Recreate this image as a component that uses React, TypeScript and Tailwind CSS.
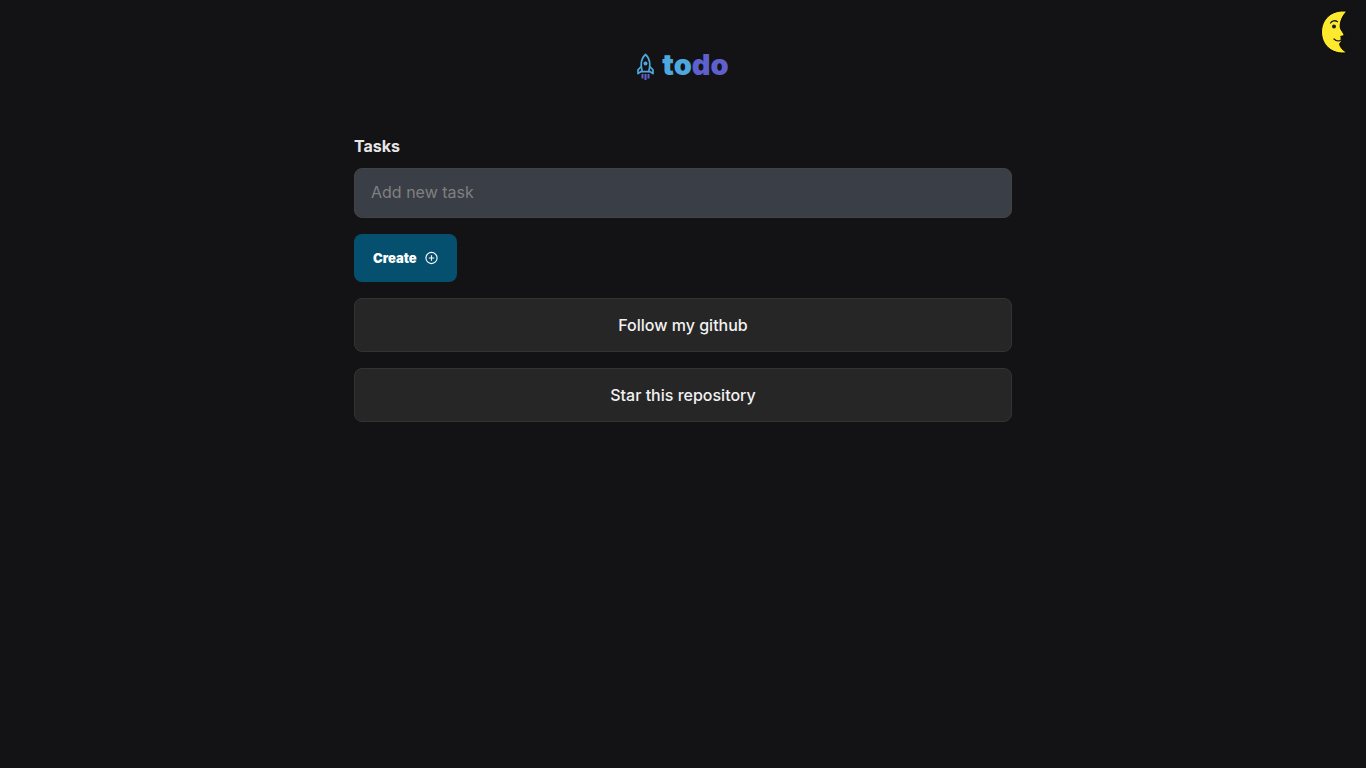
import { useState } from "react";
import type { FormEvent } from "react";

function Rocket() {
  return (
    <svg className="mt-1" width="17" height="28" viewBox="0 0 17 28" fill="none" aria-hidden="true">
      <g stroke="#4EA8DE" strokeWidth="1.700" strokeLinejoin="round">
        <path d="M8.500 1.500C6.500 3.300 4.200 7.500 4.200 11.500c0 2.800.5 5 1.200 7.200h6.200c.7-2.200 1.200-4.400 1.200-7.200 0-4-2.300-8.200-4.300-10Z" />
        <path d="M4.300 13.500 1 16.800v3.800l2.700-1.900h1.700M12.700 13.500l3.300 3.300v3.800l-2.700-1.900h-1.700" />
      </g>
      <circle cx="8.500" cy="10.500" r="2" fill="#4EA8DE" />
      <path d="M5.500 21v4.500M8.500 21v6M11.500 21v4.500" stroke="#5E60CE" strokeWidth="2" />
    </svg>
  );
}

function Moon() {
  return (
    <svg width="28" height="44" viewBox="0 0 28 44" aria-hidden="true">
      <path
        d="M27 1.300C11-1 1.500 10 1.500 22s9.500 23 25.500 20.700c-4-2.200-6.900-5.400-7.400-8.400.1-1.700 1.900-2.200 1.900-3.700 0-.8-.5-1.300-.5-2 .2-.9 0-1.700-.3-2.200 1-.3 3.300-.6 3.200-1.800-.1-1.700-3.400-4.500-3.700-7.500C19.900 11.500 22.500 5.500 27 1.300Z"
        fill="#FFE92E"
        stroke="#050505"
        strokeWidth="1"
      />
      <ellipse cx="14" cy="16.500" rx="2" ry="2.100" fill="#17202B" />
      <g fill="none" stroke="#17202B" strokeWidth="1.300" strokeLinecap="round">
        <path d="M10.500 13c1.400-2.200 4.500-3 7-1.300" />
        <path d="M14 29c1.700 1.900 4.300 2.300 6.500 1.300" />
      </g>
    </svg>
  );
}

function PlusCircle() {
  return (
    <svg width="13" height="14" viewBox="0 0 13 14" fill="none" stroke="currentColor" aria-hidden="true">
      <circle cx="6.500" cy="7" r="5.600" strokeWidth="1.100" />
      <path d="M6.500 4.300v5.400M3.800 7h5.400" strokeWidth="1.100" />
    </svg>
  );
}

const links = [
  { label: "Follow my github", href: "#github" },
  { label: "Star this repository", href: "#repository" },
];

export default function App() {
  const [task, setTask] = useState("");
  const submit = (event: FormEvent) => {
    event.preventDefault();
    setTask("");
  };

  return (
    <div className="min-h-screen bg-[#131315] font-['Inter',sans-serif] text-[#f2f2f2]">
      <button type="button" aria-label="Toggle theme" className="absolute top-2.5 right-[18px] cursor-pointer">
        <Moon />
      </button>
      <header className="flex items-center justify-center gap-2 pt-[45px]">
        <Rocket />
        <h1 className="text-[29px] leading-10 font-black text-[#4EA8DE]">
          to<span className="text-[#5E60CE]">do</span>
        </h1>
      </header>
      <main className="mx-auto mt-[49px] flex w-full max-w-[658px] flex-col gap-4">
        <form onSubmit={submit} className="flex flex-col items-start">
          <label htmlFor="task" className="mb-2.5 text-base leading-6 font-bold text-[#e6e6e6]">
            Tasks
          </label>
          <input
            id="task"
            value={task}
            onChange={(event) => setTask(event.target.value)}
            placeholder="Add new task"
            className="h-[50px] w-full rounded-lg border border-[#434343] bg-[#3a3e46] px-4 pb-0.5 text-base placeholder:text-[#808080]"
          />
          <button
            type="submit"
            className="mt-4 flex h-12 cursor-pointer items-center gap-2 rounded-lg bg-[#04506e] px-[19px] text-[13px] leading-5 font-black text-white"
          >
            Create
            <PlusCircle />
          </button>
        </form>
        {links.map((link) => (
          <a
            key={link.label}
            href={link.href}
            className="flex h-[54px] items-center justify-center rounded-lg border border-[#333333] bg-[#262626] text-base font-medium"
          >
            {link.label}
          </a>
        ))}
      </main>
    </div>
  );
}
